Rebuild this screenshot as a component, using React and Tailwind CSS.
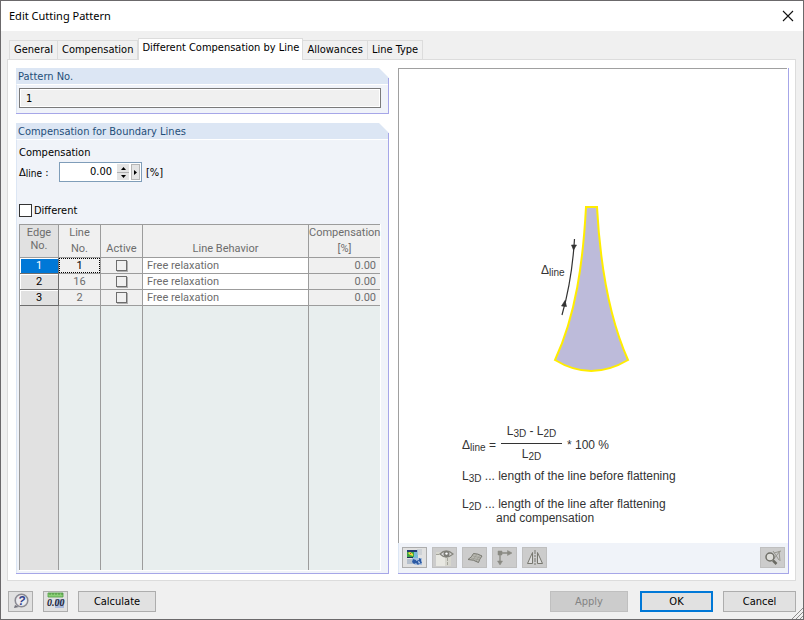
import React from "react";

const tabs = ["General", "Compensation", "Different Compensation by Line", "Allowances", "Line Type"];
const rows = [
  { edge: 1, line: 1 },
  { edge: 2, line: 16 },
  { edge: 3, line: 2 },
];

function Group({ title, children, className = "" }) {
  return (
    <section className={`relative flex flex-col border-b border-[#a6a6e8] ${className}`}>
      <h2 className="h-4 bg-[#dce6f4] pt-px pl-0.5 text-[11px] leading-[15px] text-[#1f4e79] [clip-path:polygon(0_0,calc(100%-10px)_0,100%_10px,100%_100%,0_100%)]">
        {title}
      </h2>
      <div className="flex grow flex-col border-t border-l border-t-white border-l-[#dce6f4] bg-[#f0f3f9] pr-2 pl-0.5">{children}</div>
      <span className="absolute top-2.5 right-0 bottom-0 w-px bg-[#a6a6e8]" />
    </section>
  );
}

function ToolButton({ label, disabled, children }) {
  return (
    <button
      aria-label={label}
      disabled={disabled}
      className={`flex h-[21px] w-[25px] items-center justify-center border ${disabled ? "border-[#bfbfbf] bg-[#cccccc]" : "border-[#adadad] bg-[#e1e1e1]"}`}
    >
      {children}
    </button>
  );
}

function PushButton({ children, kind = "normal", className = "" }) {
  const styles = {
    normal: "border border-[#adadad] bg-[#e1e1e1]",
    primary: "border-2 border-[#0078d7] bg-[#e1e1e1]",
    disabled: "border border-[#bfbfbf] bg-[#cccccc] text-[#838383]",
  };
  return (
    <button disabled={kind === "disabled"} className={`flex h-[21px] items-center justify-center pt-0.5 text-[11px] ${styles[kind]} ${className}`}>
      {children}
    </button>
  );
}

const Sub = ({ children }) => <span className="relative top-[2px] text-[10px]">{children}</span>;

function PatternDrawing() {
  return (
    <svg width="90" height="168" viewBox="540 205 90 168" className="block" role="img" aria-label="Cutting pattern">
      <path d="M586 207H597C600 262 608 315 628 360Q591 382 555 360C576 315 583 262 586 207Z" fill="#bdbbda" stroke="#ffed00" strokeWidth="2" />
      <path d="M574.5 239Q572 280 562 315" fill="none" stroke="#333" strokeWidth="1.2" />
      <path d="M571.500 245L576.500 245L573.500 250Z M561.500 306L566.500 306.500L565 300.500Z" fill="#333" stroke="#333" strokeWidth=".6" />
      <text x="541" y="274" fill="#333" fontSize="12" className="font-['Liberation_Sans',sans-serif]">Δ</text>
      <text x="549" y="276" fill="#333" fontSize="10" className="font-['Liberation_Sans',sans-serif]">line</text>
    </svg>
  );
}

export default function App() {
  return (
    <main className="flex min-h-screen flex-col border border-[#6b696b] bg-[#f0f0f0] font-['DejaVu_Sans_Condensed','DejaVu_Sans',sans-serif] text-[11px] text-black">
      <header className="flex h-[30px] items-center justify-between bg-white pr-[9px] pl-2">
        <h1 className="font-['Noto_Sans',sans-serif] text-[11px]">Edit Cutting Pattern</h1>
        <button aria-label="Close">
          <svg width="12" height="12" viewBox="0 0 12 12" stroke="#111" strokeWidth="1.1"><path d="M1 1L11 11M11 1L1 11" /></svg>
        </button>
      </header>

      <div className="flex grow flex-col pt-[7px] pr-[7px] pl-[6px]">
        <nav role="tablist" className="flex items-end pl-0.5">
          {tabs.map((t, i) => (
            <button
              key={t}
              role="tab"
              aria-selected={i === 2}
              className={
                i === 2
                  ? "relative -mb-px h-[22px] border border-b-0 border-[#dcdcdc] bg-white px-[3px] pb-0.5"
                  : `h-[19px] border-t border-r border-[#dcdcdc] px-1 pt-px ${i === 0 ? "border-l" : ""}`
              }
            >
              {t}
            </button>
          ))}
        </nav>

        <div className="grid grow grid-cols-[373fr_391fr] gap-x-[9px] border border-[#dcdcdc] bg-white pt-2 pr-[6px] pb-[6px] pl-2">
          <div className="flex flex-col gap-[9px]">
            <Group title="Pattern No.">
              <div className="pt-[3px] pb-[5px]">
                <input aria-label="Pattern No." readOnly defaultValue="1" className="block h-5 w-full border border-[#7a7a7a] bg-[#f0f0f0] pl-[6px] ring-1 ring-white ring-inset" />
              </div>
            </Group>

            <Group title="Compensation for Boundary Lines" className="grow">
              <p className="h-[22px] pt-[5px] leading-4">Compensation</p>
              <div className="flex h-5 items-center">
                <label htmlFor="delta" className="w-10 pt-0.5">Δ<span className="relative top-px text-[10px]">line</span> :</label>
                <div className="flex h-5 w-[83px] border border-[#7f9db9] bg-white">
                  <input id="delta" defaultValue="0.00" className="w-[57px] pt-px pr-[5px] text-right" />
                  <div className="flex w-3 flex-col py-px">
                    <button aria-label="Increase" className="flex h-2 w-3 items-center justify-center bg-[#e4e4e4]"><svg width="5" height="3" viewBox="0 0 5 3"><path d="M0 3L2.500 0L5 3Z" /></svg></button>
                    <button aria-label="Decrease" className="flex h-2 w-3 items-center justify-center border-t border-[#b0b0b0] bg-[#e4e4e4]"><svg width="5" height="3" viewBox="0 0 5 3"><path d="M0 0L2.500 3L5 0Z" /></svg></button>
                  </div>
                  <button aria-label="More" className="my-px ml-[2px] flex w-[9px] items-center justify-center border border-[#b5b5b5] bg-[#e4e4e4]"><svg width="3" height="5" viewBox="0 0 3 5"><path d="M0 0L3 2.500L0 5Z" /></svg></button>
                </div>
                <span className="pt-0.5 pl-1">[%]</span>
              </div>
              <label className="mt-[22px] mb-[7px] flex h-[13px] items-center gap-[2px]">
                <input type="checkbox" className="h-[13px] w-[13px] appearance-none border border-[#333] bg-white" />
                <span className="pt-0.5">Different</span>
              </label>
              <div className="border-r border-b border-white">
                <table className="w-full table-fixed border-separate border-spacing-0 border-t border-l border-[#9c9c9c] font-['Roboto','Liberation_Sans',sans-serif] text-[#6d6d6d]">
                  <colgroup>
                    <col className="w-[39px]" /><col className="w-[42px]" /><col className="w-[42px]" /><col /><col className="w-[71px]" />
                  </colgroup>
                  <thead>
                    <tr className="h-[33px] bg-[#f0f0f0] [&>th]:border-r [&>th]:border-b [&>th]:border-[#9c9c9c] [&>th]:p-0 [&>th]:font-normal [&>th]:align-bottom">
                      <th className="bg-[#e1e1e1] leading-[13px]"><span className="block pb-[5px]">Edge<br />No.</span></th>
                      <th className="leading-4">Line<br />No.</th>
                      <th className="leading-4">Active</th>
                      <th className="leading-4">Line Behavior</th>
                      <th className="border-r-0! leading-4">Compensation<br />[%]</th>
                    </tr>
                  </thead>
                  <tbody>
                    {rows.map((r, i) => (
                      <tr key={r.edge} className="h-4 leading-[15px] [&>td]:border-r [&>td]:border-b [&>td]:border-[#9c9c9c] [&>td]:p-0">
                        <th className={`border-r border-b border-[#6d6d6d] p-0 font-normal shadow-[inset_1px_1px_0_#ffffff] ${i === 0 ? "bg-[#0078d7] text-white" : "bg-[#e1e1e1] text-black"}`}>{r.edge}</th>
                        <td className="bg-[#f0f0f0] text-center">
                          <span className={i === 0 ? "block h-[15px] text-black outline-1 -outline-offset-1 outline-black outline-dotted" : "block h-[15px]"}>{r.line}</span>
                        </td>
                        <td className="bg-[#f0f0f0]"><input type="checkbox" aria-label={`Edge ${r.edge} active`} className="mx-auto block h-[11px] w-[11px] appearance-none border border-[#6d6d6d] bg-[#f0f0f0] shadow-[1px_1px_0_#b0b0b0]" /></td>
                        <td className="bg-white"><span className="pl-1">Free relaxation</span></td>
                        <td className="border-r-0! bg-[#f0f0f0] text-right"><span className="pr-1">0.00</span></td>
                      </tr>
                    ))}
                    <tr className="h-[264px] bg-[#e8eeee] [&>td]:border-r [&>td]:border-[#9c9c9c]">
                      <td className="bg-[#e1e1e1]" /><td /><td /><td /><td className="border-r-0!" />
                    </tr>
                  </tbody>
                </table>
              </div>
              <div className="h-[2px]" />
            </Group>
          </div>

          <div className="flex flex-col border-r border-b border-[#a6a6e8]">
            <div className="mr-px flex grow flex-col items-start border-t border-l border-[#a0a0a0] bg-white pt-[136px] pl-[63px] font-['Liberation_Sans',sans-serif] text-[12px] leading-[14px] text-[#333]">
              <div className="pl-[78px]"><PatternDrawing /></div>
              <div className="flex items-center pt-[51px]">
                <span className="w-[39px] pt-1">Δ<Sub>line</Sub> =</span>
                <span className="flex w-[61px] flex-col text-center">
                  <span className="border-b border-[#333] pb-1">L<Sub>3D</Sub> - L<Sub>2D</Sub></span>
                  <span className="pt-[3px]">L<Sub>2D</Sub></span>
                </span>
                <span className="pt-1 pl-[5px]">* 100 %</span>
              </div>
              <p className="pt-[7px]">L<Sub>3D</Sub> ... length of the line before flattening</p>
              <p className="pt-[13px]">L<Sub>2D</Sub> ... length of the line after flattening</p>
              <p className="-mt-px pl-[34px]">and compensation</p>
            </div>
            <div className="flex h-[30px] items-start gap-[5px] border-l border-[#dce6f4] bg-[#f0f3f9] px-[3px] pt-1">
              <ToolButton label="Picture settings">
                <svg width="17" height="17" viewBox="0 0 17 17">
                  <path d="M1 1h11v8H1z" fill="#79b9d8" /><path d="M1 1h10v2H1z" fill="#203a72" /><path d="M1 3h7v5H1z" fill="#3da346" /><path d="M2 4l2-1 3 2v2l-3-1z" fill="#f0e23a" /><path d="M4 4h1v1H4z" fill="#d0452b" /><path d="M1 8h6v1H1z" fill="#1c2e58" /><path d="M11 1h5M11 3h5M11 5h5" stroke="#b9c2cc" />
                  <path d="M1 10h8v5H1z" fill="#b4bfcc" /><path d="M6 9h10v7H9l-3-3z" fill="#a9c0de" /><path d="M7 10l3 1v1l3-1V9l2 1v2l1 2-3 1-1 1-2-2-2 1-2-2z" fill="#2c5aa4" /><path d="M12 12l2 1-1 2z" fill="#dceaff" />
                </svg>
              </ToolButton>
              <ToolButton label="View" disabled>
                <svg width="19" height="18" viewBox="0 0 19 18" fill="none"><path d="M1 3h15v14H1z" fill="#d6d6ce" /><path d="M1 6h9v11H1z" fill="#e8e8e2" /><path d="M1 5.500h9M12.500 9v8" stroke="#a4a49a" strokeDasharray="3 1" /><path d="M5 5Q11-1 18 5Q11 11 5 5Z" fill="#dedede" stroke="#85857e" strokeWidth="1.200" /><circle cx="11.500" cy="5" r="3" fill="#7c7c76" /><circle cx="11.500" cy="4.600" r="1.200" fill="#fff" /></svg>
              </ToolButton>
              <ToolButton label="Surface" disabled>
                <svg width="18" height="16" viewBox="0 0 18 16"><path d="M2 9.500Q6 7 7.500 3.500Q12 3.500 16 6Q13.500 9 12.500 12.500Q7.500 9.500 2 9.500Z" fill="#b9b9b2" stroke="#77776f" /><path d="M5 8l9 2M7 6l8 2M11 4L7 10M14 5l-4 6" stroke="#989891" strokeWidth=".7" fill="none" /></svg>
              </ToolButton>
              <ToolButton label="Axes" disabled>
                <svg width="19" height="18" viewBox="0 0 19 18" fill="#898982" stroke="#898982"><path d="M5 4H14M5 4V13" fill="none" strokeWidth="1.300" /><path d="M3 2h4v4H3zM12.500 1.500l4.500 2.500-4.500 2.500zM2.500 12h5l-2.500 4z" strokeWidth=".5" /></svg>
              </ToolButton>
              <ToolButton label="Mirror" disabled>
                <svg width="18" height="16" viewBox="0 0 18 16" fill="#dedede" stroke="#77776f"><path d="M6.500 2.500V13.500H1.500ZM11.500 2.500V13.500H16.500Z" /><path d="M9 0V16" strokeDasharray="4 1 2 1" /></svg>
              </ToolButton>
              <span className="grow" />
              <ToolButton label="Find" disabled>
                <svg width="18" height="18" viewBox="0 0 18 18" fill="none" stroke="#96968e"><path d="M9 2l6 9M16 2L9 11M10 4l7-2M15 2l1 10" /><circle cx="6" cy="8" r="4" fill="#dededa" stroke="#6f6f68" strokeWidth="1.500" /><path d="M9 11.500l3.500 3.500" stroke="#6a6a63" strokeWidth="2.500" /></svg>
              </ToolButton>
            </div>
          </div>
        </div>
      </div>

      <footer className="relative flex h-[38px] items-center pt-0.5 pr-[7px] pl-[7px]">
        <div className="flex gap-[10px]">
          <ToolButton label="Help">
            <svg width="18" height="17" viewBox="0 0 18 17"><path d="M3 12l-1 3 5-1z" fill="#70707a" /><circle cx="9.500" cy="7.500" r="6.300" fill="#dcdce2" stroke="#8a8a92" strokeWidth="1.500" /><circle cx="9.500" cy="7.500" r="5" fill="#ececf0" /><text x="6" y="12" fontSize="12" fontWeight="bold" fill="#34448c" className="font-['Liberation_Sans',sans-serif] italic">?</text></svg>
          </ToolButton>
          <ToolButton label="Units and decimal places">
            <svg width="19" height="18" viewBox="0 0 19 18"><path d="M2 1h15v4H2z" fill="#8bd077" stroke="#4e9c43" strokeWidth=".8" /><path d="M4 1v2M7 1v2M10 1v2M13 1v2M16 1v2" stroke="#3c7c35" strokeWidth=".7" /><path d="M9 7h9v9H9z" fill="#a9b9db" /><text x="1" y="14" fontSize="10" fontWeight="bold" fill="#202438" className="font-['Liberation_Serif',serif] italic">0.00</text></svg>
          </ToolButton>
          <PushButton className="w-[78px]">Calculate</PushButton>
        </div>
        <div className="ml-auto flex gap-[10px]">
          <PushButton kind="disabled" className="mr-[2px] w-[78px]">Apply</PushButton>
          <PushButton kind="primary" className="w-[73px]">OK</PushButton>
          <PushButton className="w-[73px]">Cancel</PushButton>
        </div>
        <svg width="12" height="12" viewBox="0 0 12 12" className="absolute right-0 bottom-0" stroke="#8c8c8c" aria-hidden="true"><path d="M1 12L12 1M5 12L12 5M9 12L12 9" /></svg>
      </footer>
    </main>
  );
}
